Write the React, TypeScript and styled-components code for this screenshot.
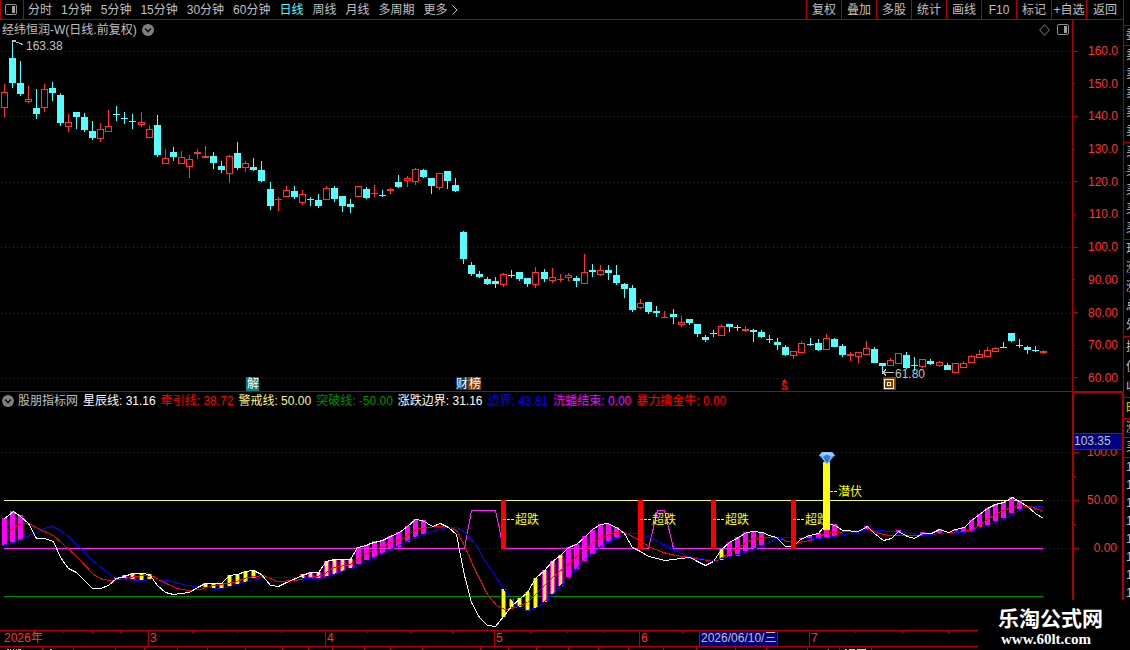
import React from "react";
import styled, { createGlobalStyle } from "styled-components";

const RED = "#b00000";
const LABEL_RED = "#ff3232";
const CYAN = "#54ffff";
const GREY = "#c0c0c0";
const MAGENTA = "#ff00ff";
const FONT = '"Liberation Sans", "Noto Sans CJK SC", sans-serif';

const GlobalStyle = createGlobalStyle`
  *, *::before, *::after { box-sizing: border-box; }
  html, body { margin: 0; background: #000; }
  body { overflow: hidden; }
  button { font: inherit; color: inherit; background: none; border: 0; padding: 0; cursor: pointer; white-space: nowrap; }
  ul { list-style: none; margin: 0; padding: 0; }
  svg { display: block; }
`;

const Page = styled.div`
  position: relative;
  display: flex;
  height: 100vh;
  overflow: hidden;
  background: #000;
  color: ${GREY};
  font: 12px/14px ${FONT};
`;

const Workspace = styled.main`
  flex: 1;
  min-width: 0;
  display: flex;
  flex-direction: column;
`;

const Toolbar = styled.header`
  flex: none;
  display: flex;
  height: 20px;
  border-left: 1px solid ${RED};
  border-bottom: 1px solid ${RED};
`;

const PanelToggle = styled.button`
  display: flex;
  align-items: center;
  justify-content: center;
  width: 23px;
  padding-right: 2px;
  border-right: 1px solid ${RED};
`;

const Periods = styled.nav`
  flex: 1;
  display: flex;
  align-items: center;
  gap: 9px;
  padding-left: 4px;
`;

const PeriodButton = styled.button<{ $active?: boolean }>`
  display: flex;
  align-items: center;
  gap: 4px;
  color: ${(p) => (p.$active ? CYAN : GREY)};
`;

const Actions = styled.div`
  display: grid;
  grid-template-columns: repeat(8, 35px) 37px;
`;

const ActionButton = styled.button`
  border-left: 1px solid ${RED};
  text-align: center;
`;

const PanelRow = styled.section`
  flex: none;
  display: flex;
`;

const PricePanel = styled.div`
  flex: 1;
  min-width: 0;
`;

const IndicatorPanel = styled(PricePanel)`
  border-top: 1px solid ${RED};
`;

const PanelHeader = styled.div`
  display: flex;
  align-items: center;
  height: 18px;
  padding: 0 3px 0 2px;
  gap: 5px;
  white-space: nowrap;
`;

const PriceHeader = styled(PanelHeader)`
  padding-top: 1px;
`;

const HeaderIcons = styled.span`
  display: flex;
  gap: 7px;
  margin-left: auto;
`;

const IndicatorName = styled.span`
  display: flex;
  align-items: center;
  gap: 4px;
`;

const Reading = styled.span<{ $color: string }>`
  color: ${(p) => p.$color};
`;

const PriceScale = styled.ul`
  width: 51px;
  border-left: 1px solid ${RED};
  padding: 24px 5px 6px 0;
  display: flex;
  flex-direction: column;
  justify-content: space-between;
  color: ${LABEL_RED};
`;

const IndicatorScale = styled.ul`
  position: relative;
  width: 51px;
  border: solid ${RED};
  border-width: 2px 1px 0 2px;
  padding: 52px 5px 0 0;
  display: flex;
  flex-direction: column;
  gap: 10px;
  color: ${LABEL_RED};
`;

const ScaleMark = styled.li<{ $minor?: boolean }>`
  display: flex;
  align-items: center;
  justify-content: space-between;
  height: 14px;
  &::before {
    content: "";
    width: ${(p) => (p.$minor ? 2 : 5)}px;
    height: 1px;
    background: ${RED};
  }
`;

const CursorValue = styled.li`
  position: absolute;
  top: 40px;
  left: 0;
  right: 0;
  height: 17px;
  line-height: 15px;
  background: #000080;
  border: solid ${RED};
  border-width: 1px 0;
  color: ${GREY};
`;

const Timeline = styled.div`
  position: relative;
  flex: none;
  display: flex;
  height: 17px;
  padding-right: 152px;
  border: solid ${RED};
  border-width: 1px 0;
  color: ${LABEL_RED};
  line-height: 15px;
`;

const Month = styled.div<{ $width?: number }>`
  flex: ${(p) => (p.$width ? "0 0 " + p.$width + "px" : "1")};
  padding-left: 4px;
  & + & { border-left: 1px solid ${RED}; padding-left: 1px; }
`;

const CursorDate = styled.div`
  position: absolute;
  top: 0;
  left: 699px;
  width: 79px;
  height: 15px;
  padding-left: 1px;
  background: #000080;
  border: solid ${RED};
  border-width: 0 1px;
  color: ${GREY};
`;

const TickLayer = styled.svg`
  position: absolute;
  top: 0;
  left: 0;
`;

const QuoteStrip = styled.aside`
  flex: none;
  width: 7px;
  border-left: 1px solid ${RED};
  padding-top: 25px;
  overflow: hidden;
`;

const QuoteGroup = styled.div<{ $row: number; $spaced: boolean; $yellow?: boolean }>`
  border-top: 1px solid ${RED};
  padding: 0 0 ${(p) => (p.$spaced ? 1 : 0)}px 2px;
  color: ${(p) => (p.$yellow ? "#e0e000" : GREY)};
  line-height: ${(p) => p.$row}px;
`;

const QuoteCell = styled.div`
  overflow: hidden;
  white-space: nowrap;
`;

const Brand = styled.a`
  position: absolute;
  right: 0;
  bottom: 0;
  width: 152px;
  height: 50px;
  padding: 6px 0 0 20px;
  background: #000;
  color: #fff;
  text-decoration: none;
  font: bold 21px/22px "Noto Sans CJK SC", sans-serif;
`;

const BrandUrl = styled.span`
  display: block;
  padding: 2px 0 0 3px;
  font: bold 15px/18px "Liberation Serif", serif;
`;

type Candle = [kind: "r" | "c", high: number, top: number, bottom: number, low: number];

const candles: Candle[] = [
  ["r", 84, 92, 108, 117], ["c", 41, 58, 83, 88], ["c", 61, 83, 94, 96], ["r", 86, 99, 102, 103],
  ["c", 89, 108, 114, 119], ["r", 84, 89, 108, 112], ["c", 82, 88, 93, 101], ["c", 93, 95, 123, 126],
  ["r", 114, 122, 127, 132], ["c", 112, 112, 117, 129], ["c", 113, 117, 130, 132], ["c", 121, 131, 138, 140],
  ["r", 123, 129, 139, 142], ["r", 110, 126, 132, 132], ["c", 106, 114, 115, 121], ["c", 112, 118, 119, 124],
  ["c", 114, 121, 122, 129], ["r", 112, 122, 125, 127], ["r", 125, 129, 138, 138], ["c", 115, 125, 155, 157],
  ["r", 149, 158, 164, 164], ["c", 147, 152, 157, 161], ["r", 151, 157, 164, 164], ["r", 155, 159, 167, 178],
  ["r", 149, 152, 154, 159], ["r", 146, 156, 158, 158], ["c", 152, 156, 163, 169], ["c", 161, 166, 170, 173],
  ["r", 155, 156, 174, 183], ["c", 142, 153, 168, 170], ["r", 161, 163, 168, 172], ["c", 158, 167, 170, 171],
  ["c", 161, 170, 181, 182], ["c", 182, 189, 206, 210], ["r", 197, 199, 200, 211], ["r", 186, 190, 197, 197],
  ["c", 186, 191, 197, 199], ["r", 190, 194, 203, 205], ["c", 197, 199, 200, 206], ["c", 194, 200, 206, 208],
  ["r", 186, 188, 200, 200], ["c", 186, 188, 199, 202], ["c", 196, 196, 206, 212], ["c", 199, 204, 207, 213],
  ["r", 186, 186, 197, 197], ["c", 187, 189, 198, 199], ["r", 185, 193, 194, 197], ["c", 190, 195, 196, 197],
  ["r", 188, 189, 191, 194], ["c", 175, 182, 187, 188], ["r", 176, 178, 181, 187], ["r", 168, 169, 182, 185],
  ["c", 169, 170, 177, 178], ["c", 178, 178, 186, 194], ["r", 173, 173, 188, 190], ["c", 171, 171, 181, 189],
  ["c", 178, 185, 191, 192], ["c", 231, 232, 259, 264], ["c", 262, 265, 274, 276], ["c", 271, 274, 277, 278],
  ["c", 277, 279, 284, 285], ["c", 277, 281, 284, 288], ["r", 273, 274, 285, 287], ["c", 270, 275, 276, 278],
  ["c", 272, 272, 279, 281], ["c", 278, 278, 284, 287], ["r", 267, 272, 285, 288], ["c", 269, 272, 279, 282],
  ["r", 268, 277, 281, 283], ["r", 274, 279, 280, 282], ["r", 273, 275, 278, 281], ["c", 276, 278, 281, 287],
  ["r", 254, 272, 284, 284], ["c", 264, 270, 272, 277], ["r", 265, 270, 275, 276], ["c", 265, 270, 273, 280],
  ["c", 265, 275, 283, 285], ["c", 283, 284, 289, 298], ["c", 285, 288, 310, 312], ["r", 299, 303, 308, 309],
  ["c", 302, 302, 312, 314], ["c", 306, 311, 313, 317], ["r", 311, 317, 318, 318], ["c", 309, 314, 317, 324],
  ["r", 316, 322, 325, 327], ["c", 319, 319, 323, 325], ["c", 324, 324, 334, 337], ["c", 335, 337, 340, 342],
  ["c", 330, 333, 334, 337], ["r", 324, 326, 336, 336], ["c", 324, 324, 327, 332], ["c", 325, 327, 328, 331],
  ["r", 326, 329, 331, 332], ["c", 329, 330, 332, 342], ["c", 330, 332, 337, 338], ["c", 335, 339, 340, 343],
  ["c", 338, 342, 345, 350], ["c", 345, 347, 355, 356], ["r", 351, 351, 356, 359], ["r", 341, 343, 353, 353],
  ["c", 338, 344, 345, 346], ["c", 339, 343, 350, 351], ["r", 334, 338, 350, 350], ["c", 338, 339, 347, 347],
  ["c", 344, 346, 355, 357], ["r", 352, 354, 356, 361], ["r", 352, 352, 357, 363], ["r", 341, 348, 355, 355],
  ["c", 347, 349, 363, 363], ["c", 363, 363, 366, 374], ["r", 358, 360, 366, 366], ["r", 353, 353, 364, 364],
  ["c", 352, 355, 368, 369], ["c", 357, 365, 366, 371], ["r", 359, 359, 367, 368], ["c", 359, 361, 364, 365],
  ["r", 361, 362, 366, 367], ["c", 363, 365, 370, 370], ["r", 363, 363, 373, 373], ["r", 361, 363, 368, 368],
  ["r", 355, 356, 363, 363], ["r", 350, 354, 358, 358], ["r", 347, 350, 357, 357], ["r", 347, 348, 352, 352],
  ["c", 342, 347, 348, 348], ["c", 333, 333, 341, 342], ["c", 339, 345, 346, 348], ["c", 346, 347, 350, 354],
  ["c", 346, 350, 351, 352], ["r", 350, 351, 353, 354],
];

const candleX = (i: number) => Math.floor(4.02 + i * 8.0602);

const whiteLine =
  "4,518 8,515 13,511 20,516 28,523 36,538 44,538 53,541 60,557 68,568 76,572 92,588 100,588 108,585 116,578 124,576 132,573 141,573 149,574 157,585 165,592 173,594 189,592 197,587 205,583 221,583 229,575 237,574 245,571 253,570 261,574 270,585 278,586 286,582 302,575 310,572 318,572 326,561 334,559 350,559 357,547 366,545 370,543 382,540 390,536 399,532 407,526 415,519 422,520 432,526 440,523 448,527 456,534 460,555 464,575 471,602 479,617 487,625 495,626 503,616 511,606 520,598 527,592 535,578 544,570 552,561 560,555 568,547 576,544 584,537 592,529 600,524 607,523 616,527 624,533 632,547 640,551 648,556 665,560 680,558 690,557 697,561 705,565 713,561 721,549 729,542 738,537 746,532 753,531 762,532 769,535 776,537 785,546 793,546 800,539 809,535 818,533 823,527 830,524 835,525 842,530 858,531 867,526 874,533 883,540 891,538 898,531 907,536 914,538 922,533 931,533 939,529 948,532 955,529 964,527 971,520 979,514 987,508 995,504 1003,502 1012,497 1019,501 1027,506 1035,513 1043,518";
const redLine =
  "4,535 8,531 15,526 21,523 29,523 37,528 53,535 62,543 77,557 93,574 102,579 110,580 124,578 142,575 153,576 160,580 168,584 177,588 188,590 200,589 213,585 233,582 247,577 263,575 277,581 295,580 310,577 322,575 333,567 350,564 363,554 380,547 390,542 403,538 415,529 427,527 437,526 450,527 456,530 463,543 473,566 487,594 496,605 505,609 515,607 527,602 537,592 552,577 570,562 583,550 600,537 615,532 625,532 637,539 650,547 663,552 675,555 690,557 707,560 717,560 728,553 745,543 753,538 777,537 787,541 797,542 810,540 827,532 857,531 868,529 883,534 890,535 917,535 940,533 957,532 973,529 987,519 1000,511 1017,505 1030,506 1043,511";
const blueLine =
  "4,544 13,542 27,536 37,532 43,528 52,526 60,530 70,538 80,548 92,560 103,569 115,577 127,579 140,580 153,579 167,580 183,584 200,587 222,588 237,584 260,577 283,577 320,578 333,574 353,567 380,554 390,549 410,539 427,532 447,527 457,527 467,534 477,547 485,561 503,588 517,606 527,610 537,607 552,594 570,575 583,560 603,544 617,537 628,533 637,533 650,537 663,544 677,551 688,556 713,560 730,556 750,550 762,545 775,538 793,537 820,538 837,535 857,532 867,529 880,530 900,532 920,534 947,533 970,531 987,525 1007,517 1023,507 1043,506";
const washLine = "3.5,548 464,548 471,510 495,510 503,548 648,548 657,510 664,510 673,548 1042.5,548";

type Bar = [x: number, top: number, bottom: number];

const risingBars: Bar[] = [
  [4, 518, 545], [12, 511, 542], [20, 515, 540], [358, 547, 564], [366, 545, 560], [374, 541, 557],
  [382, 540, 553], [390, 536, 549], [398, 532, 547], [407, 526, 542], [415, 519, 537], [423, 520, 534],
  [568, 547, 577], [576, 544, 569], [584, 536, 561], [592, 530, 554], [600, 524, 547], [608, 524, 541],
  [616, 527, 537], [729, 542, 557], [737, 537, 556], [745, 532, 551], [753, 532, 548], [761, 533, 545],
  [801, 537, 539], [809, 535, 538], [818, 533, 538], [826, 529, 538], [834, 524, 536], [866, 526, 529],
  [898, 530, 533], [922, 532, 534], [930, 533, 535], [939, 529, 534], [955, 529, 531], [963, 527, 532],
  [971, 520, 531], [979, 514, 527], [987, 508, 525], [995, 504, 521], [1003, 502, 518], [1011, 497, 513],
  [1019, 500, 509],
];
const lowBars: Bar[] = [
  [116, 577, 579], [124, 575, 579], [132, 573, 580], [141, 573, 580], [149, 574, 579], [205, 583, 588],
  [213, 583, 588], [221, 583, 588], [229, 575, 586], [237, 574, 584], [245, 572, 582], [253, 570, 578],
  [302, 574, 578], [310, 572, 578], [318, 572, 578], [326, 561, 577], [334, 560, 574], [342, 559, 571],
  [350, 559, 568], [503, 589, 617], [511, 599, 607], [519, 598, 607], [527, 592, 611], [535, 578, 608],
  [544, 570, 602], [552, 561, 594], [560, 555, 586], [721, 549, 560],
];

const periods = ["分时", "1分钟", "5分钟", "15分钟", "30分钟", "60分钟", "日线", "周线", "月线", "多周期"];
const actions = ["复权", "叠加", "多股", "统计", "画线", "F10", "标记", "+自选", "返回"];
const prices = ["160.0", "150.0", "140.0", "130.0", "120.0", "110.0", "100.0", "90.00", "80.00", "70.00", "60.00"];
const readings: [string, string][] = [
  ["星辰线: 31.16", "#ffffff"],
  ["牵引线: 38.72", "#ff0000"],
  ["警戒线: 50.00", "#f8f890"],
  ["突破线: -50.00", "#009000"],
  ["涨跌边界: 31.16", "#ffffff"],
  ["边界: 43.81", "#0000ff"],
  ["洗蟠结束: 0.00", "#ff00ff"],
  ["暴力擒金牛: 0.00", "#ff0000"],
];
const oversold = [503, 640, 713, 793];

const PanelIcon = () => (
  <svg width="12" height="12" viewBox="0 0 12 12" aria-hidden="true">
    <rect x="0.5" y="0.5" width="11" height="10" rx="1.5" fill="none" stroke="#909090" />
    <rect x="7" y="2" width="3" height="7" fill="#a0a0a0" />
  </svg>
);

const DropIcon = () => (
  <svg width="12" height="12" viewBox="0 0 12 12" aria-hidden="true">
    <circle cx="6" cy="6" r="6" fill="#808080" />
    <path d="M3 4.5 6 7.5 9 4.5" fill="none" stroke="#101010" strokeWidth="1.6" />
  </svg>
);

const Grid = ({ rows }: { rows: number[] }) => (
  <>
    {rows.map((y) => (
      <line key={y} x1="1" x2="100%" y1={y + 0.5} y2={y + 0.5} stroke="#a00000" strokeDasharray="1 3" />
    ))}
  </>
);

const CandleChart = () => (
  <svg width="100%" height="353" shapeRendering="crispEdges" fontFamily={FONT} fontSize="12">
    <g transform="translate(0 -38)">
      <Grid rows={[51, 116, 182, 247, 313, 378]} />
      {candles.map(([kind, high, top, bottom, low], i) => {
        const x = candleX(i);
        const color = kind === "r" ? LABEL_RED : CYAN;
        const hollow = kind === "r" && bottom - top > 2;
        return (
          <g key={i} fill={color}>
            <rect x={x} y={high} width="1" height={top - high} />
            <rect x={x} y={bottom} width="1" height={low - bottom} />
            {hollow ? (
              <rect x={x - 2.5} y={top + 0.5} width="6" height={bottom - top - 1} fill="#000" stroke={color} />
            ) : (
              <rect x={x - 3} y={top} width="7" height={bottom - top} />
            )}
          </g>
        );
      })}
      <path d="M12.5 44V40.5H16M13 41L23 44.5" fill="none" stroke={GREY} />
      <text x="26" y="50" fill={GREY}>163.38</text>
      <path d="M894 372.5H883M886 369.5L883 372.5L886 375.5" fill="none" stroke={GREY} />
      <text x="895" y="378" fill={GREY}>61.80</text>
      <rect x="246" y="377" width="13" height="14" fill="#008080" />
      <text x="247" y="388" fill="#fff">解</text>
      <rect x="456" y="377" width="12" height="13" fill="#003870" />
      <text x="456" y="388" fill="#fff">财</text>
      <rect x="468" y="377" width="13" height="13" fill="#804000" />
      <text x="469" y="388" fill="#fff">榜</text>
      <path d="M784.5 379L787 382H782Z" fill="#ff0000" />
      <text x="781" y="390" fill="#ff0000" fontSize="10" fontWeight="bold">S</text>
      <rect x="883" y="377" width="13" height="13" fill="#804000" />
      <rect x="884.5" y="379.5" width="9" height="9" fill="none" stroke="#fff" />
      <rect x="887.5" y="382.5" width="3" height="3" fill="none" stroke="#fff" />
    </g>
  </svg>
);

const IndicatorChart = () => (
  <svg width="100%" height="220" shapeRendering="crispEdges" fontFamily={FONT} fontSize="12">
    <defs>
      <linearGradient id="gem" x1="0" y1="0" x2="0" y2="1">
        <stop offset="0" stopColor="#3c8ce8" />
        <stop offset="1" stopColor="#1c68d8" />
      </linearGradient>
    </defs>
    <g transform="translate(0 -410)">
      <Grid rows={[452]} />
      <g stroke="#a00000" strokeDasharray="1 3">
        <line x1="1" x2="4" y1="500.5" y2="500.5" />
        <line x1="1" x2="4" y1="548.5" y2="548.5" />
        <line x1="1045" x2="100%" y1="500.5" y2="500.5" />
        <line x1="1045" x2="100%" y1="548.5" y2="548.5" />
        <line x1="465" x2="502" y1="548.5" y2="548.5" />
        <line x1="649" x2="673" y1="548.5" y2="548.5" />
      </g>
      <path d="M4 596.5H1043" stroke="#009000" />
      <path d="M4 500.5H1043" stroke="#f8f890" />
      <g fill={MAGENTA}>
        {risingBars.map(([x, top, bottom]) => (
          <rect key={x} x={x - 2} y={top} width="5" height={bottom - top} />
        ))}
      </g>
      {lowBars.map(([x, top, bottom]) => (
        <g key={x}>
          <rect x={x - 2} y={top} width="5" height={bottom - top} fill={MAGENTA} />
          <rect x={x - 1} y={top} width="3" height={bottom - top} fill="#ffff00" />
        </g>
      ))}
      <g fill="none" transform="translate(0.5 0.5)">
        <polyline points={washLine} stroke="#ff20ff" />
        <polyline points={redLine} stroke="#ff0000" />
        <polyline points={blueLine} stroke="#0000ff" />
        <polyline points={whiteLine} stroke="#ffffff" />
      </g>
      {oversold.map((x) => (
        <g key={x}>
          <rect x={x - 2} y="500" width="5" height="49" fill="#ff0000" />
          <path d={`M${x} 519.5H${x + 11}`} stroke="#ffff00" strokeDasharray="3 1" />
          <text x={x + 12} y="524" fill="#ffff00">超跌</text>
        </g>
      ))}
      <rect x="823" y="462" width="7" height="68" fill="#ffff00" />
      <path d="M830 491.5H837" stroke="#ffff00" strokeDasharray="3 1" />
      <text x="838" y="496" fill="#ffff00">潜伏</text>
      <g shapeRendering="auto">
        <path d="M822 452H832L835 455.5L827 464.5L819 455.5Z" fill="url(#gem)" />
        <path d="M822 452H832L835 455.5L831.5 457L827 454.5L822.5 457L819 455.5Z" fill="#90c4ff" />
        <path d="M822.5 457L827 464.5L831.5 457M824 453.5H830" fill="none" stroke="#c8e4ff" strokeWidth="0.8" />
      </g>
    </g>
  </svg>
);

const BottomTabs = () => (
  <svg width="100%" height="3" shapeRendering="crispEdges" aria-hidden="true">
    {[42, 73, 115, 144, 177, 207, 245, 282, 308, 332, 364, 390, 422, 480, 508, 536, 568, 598, 628, 663, 696, 735, 766, 807, 839, 871].map((x) => (
      <rect key={x} x={x} y="0" width="1" height="3" fill={RED} />
    ))}
    <path d="M7 2.5H9M10 2.5H11M13 2.5H14M16 2.5H17M18 2.5H21M50 2.5H52M828 2.5H829" stroke={GREY} />
    <path d="M845 2.5H847M849 2.5H855M857 2.5H866" stroke={CYAN} />
  </svg>
);

const quotes: { row: number; cells: string[]; yellow?: boolean }[] = [
  { row: 19, cells: ["委"] },
  { row: 19, cells: ["卖", "卖", "卖", "卖", "卖"] },
  { row: 19, cells: ["买", "买", "买", "买", "买"] },
  { row: 19, cells: ["现", "涨", "涨", "总", "外"] },
  { row: 20, cells: ["换", "值", "收"] },
  { row: 20, cells: ["时"], yellow: true },
  { row: 18, cells: ["涨"] },
  { row: 19, cells: ["买"] },
  { row: 18, cells: ["1", "1", "1", "1", "1", "1", "1", "1"] },
];

export default function App() {
  return (
    <>
      <GlobalStyle />
      <Page>
        <Workspace>
          <Toolbar>
            <PanelToggle aria-label="侧栏"><PanelIcon /></PanelToggle>
            <Periods>
              {periods.map((p) => (
                <PeriodButton key={p} $active={p === "日线"}>{p}</PeriodButton>
              ))}
              <PeriodButton>
                更多
                <svg width="6" height="10" viewBox="0 0 6 10" aria-hidden="true">
                  <path d="M0.5 0.5L5 5L0.5 9.5" fill="none" stroke={GREY} />
                </svg>
              </PeriodButton>
            </Periods>
            <Actions>
              {actions.map((a) => <ActionButton key={a}>{a}</ActionButton>)}
            </Actions>
          </Toolbar>

          <PanelRow>
            <PricePanel>
              <PriceHeader>
                <span>经纬恒润-W(日线.前复权)</span>
                <DropIcon />
                <HeaderIcons>
                  <svg width="11" height="12" viewBox="0 0 11 12" aria-hidden="true">
                    <path d="M5.5 0.7L10.3 6L5.5 11.3L0.7 6Z" fill="none" stroke="#808080" />
                  </svg>
                  <PanelIcon />
                </HeaderIcons>
              </PriceHeader>
              <CandleChart />
            </PricePanel>
            <PriceScale>
              {prices.map((p, i) => <ScaleMark key={p} $minor={i % 2 === 1}>{p}</ScaleMark>)}
            </PriceScale>
          </PanelRow>

          <PanelRow>
            <IndicatorPanel>
              <PanelHeader>
                <IndicatorName><DropIcon />股朋指标网</IndicatorName>
                {readings.map(([text, color]) => <Reading key={text} $color={color}>{text}</Reading>)}
              </PanelHeader>
              <IndicatorChart />
            </IndicatorPanel>
            <IndicatorScale>
              <ScaleMark>100.0</ScaleMark>
              <ScaleMark $minor />
              <ScaleMark>50.00</ScaleMark>
              <ScaleMark $minor />
              <ScaleMark>0.00</ScaleMark>
              <CursorValue>103.35</CursorValue>
            </IndicatorScale>
          </PanelRow>

          <Timeline>
            <Month $width={148}>2026年</Month>
            <Month $width={177}>3</Month>
            <Month $width={169}>4</Month>
            <Month $width={145}>5</Month>
            <Month $width={170}>6</Month>
            <Month>7</Month>
            <TickLayer width="1000" height="2" shapeRendering="crispEdges" aria-hidden="true">
              {[63, 92, 120, 192, 237, 281, 367, 410, 452, 530, 567, 603, 682, 855, 902, 948].map((x) => (
                <rect key={x} x={x} y="0" width="1" height="2" fill={RED} />
              ))}
            </TickLayer>
            <CursorDate>2026/06/10/三</CursorDate>
          </Timeline>
          <BottomTabs />
        </Workspace>

        <QuoteStrip>
          {quotes.map((group, g) => (
            <QuoteGroup key={g} $row={group.row} $spaced={group.cells.length === 5} $yellow={group.yellow}>
              {group.cells.map((cell, c) => <QuoteCell key={c}>{cell}</QuoteCell>)}
            </QuoteGroup>
          ))}
        </QuoteStrip>

        <Brand href="#home">
          乐淘公式网
          <BrandUrl>www.60lt.com</BrandUrl>
        </Brand>
      </Page>
    </>
  );
}
